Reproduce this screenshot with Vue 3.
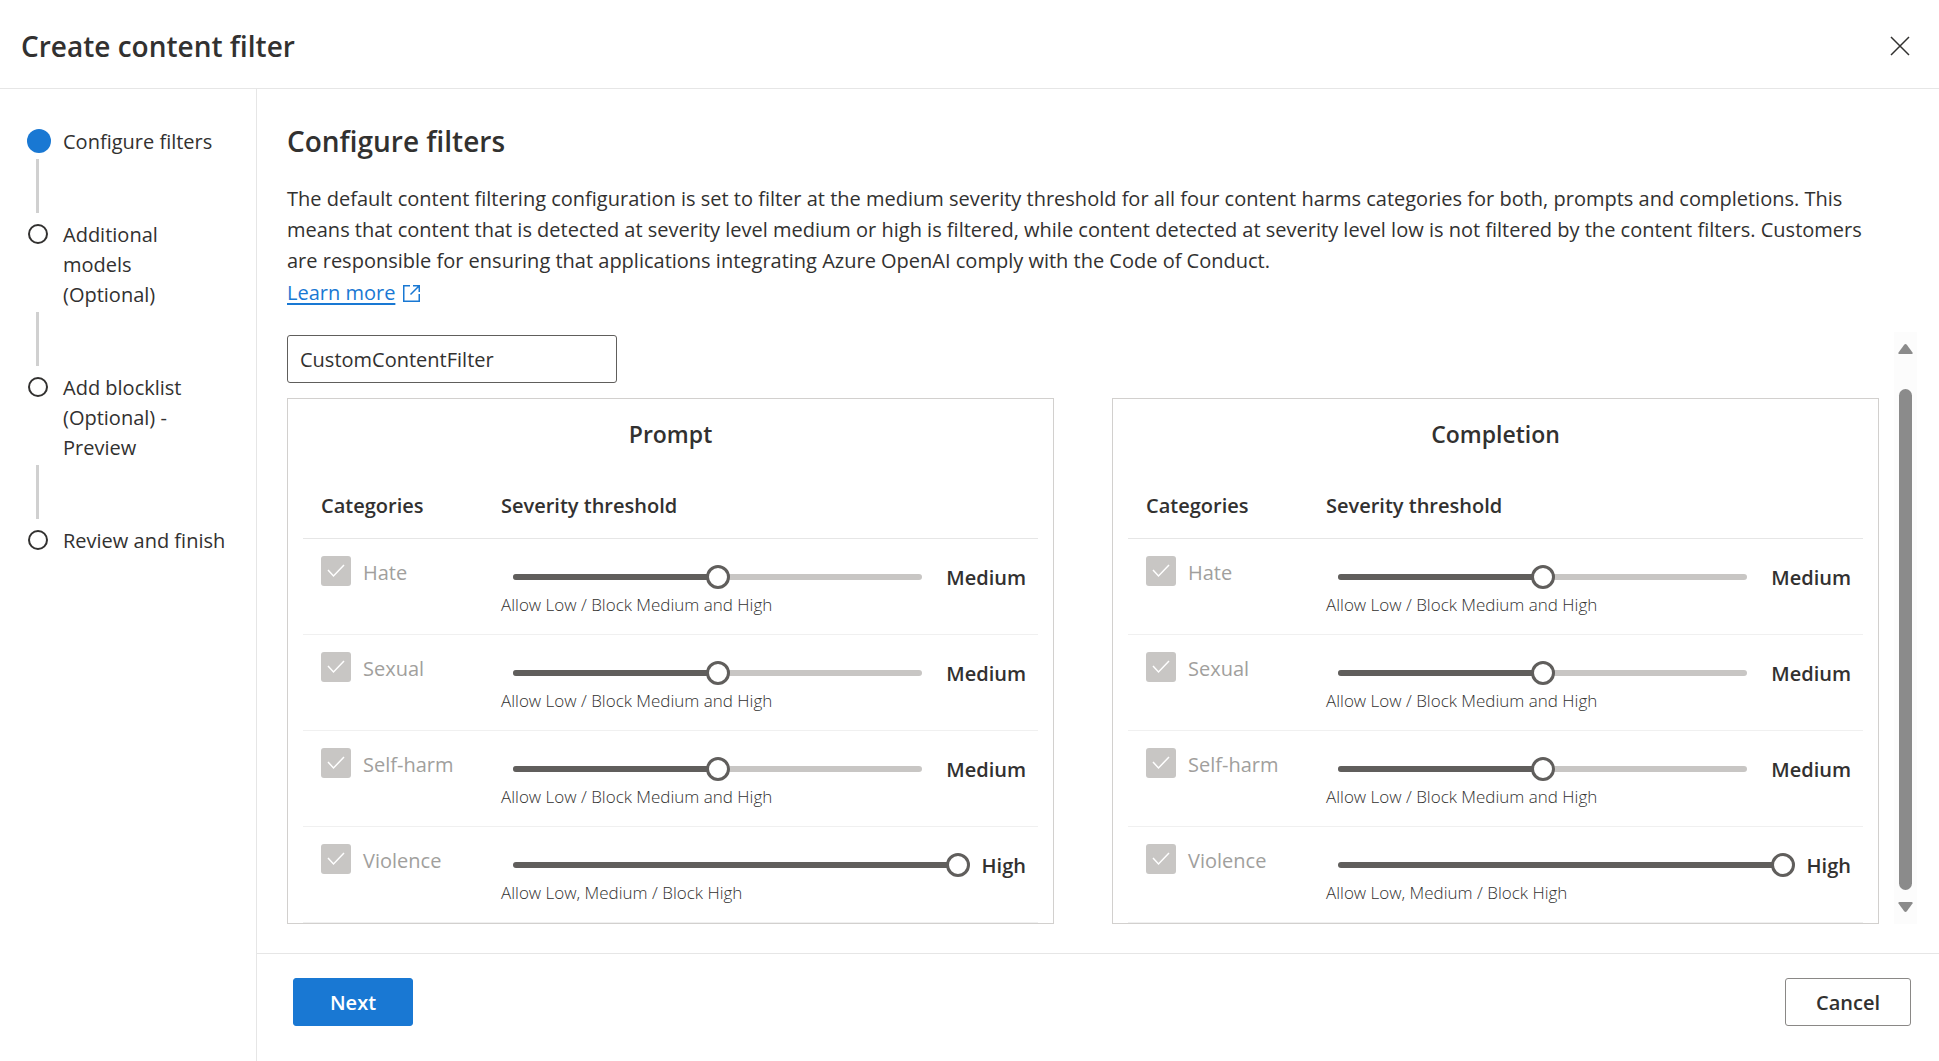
<script setup>
import { ref } from 'vue'

const steps = [
  { label: 'Configure filters', current: true },
  { label: 'Additional models (Optional)' },
  { label: 'Add blocklist (Optional) - Preview' },
  { label: 'Review and finish' },
]

const levels = ['Low', 'Medium', 'High']
const hints = [
  'Block Low, Medium and High',
  'Allow Low / Block Medium and High',
  'Allow Low, Medium / Block High',
]

const makeRows = () => [
  { name: 'Hate', level: 1 },
  { name: 'Sexual', level: 1 },
  { name: 'Self-harm', level: 1 },
  { name: 'Violence', level: 2 },
]

const filterName = ref('CustomContentFilter')
const panels = ref([
  { title: 'Prompt', rows: makeRows() },
  { title: 'Completion', rows: makeRows() },
])
</script>

<template>
  <div class="dialog">
    <header class="top">
      <h1>Create content filter</h1>
      <button class="close" type="button" aria-label="Close">
        <svg width="20" height="20" viewBox="0 0 20 20" fill="none" stroke="currentColor" stroke-width="1.5">
          <path d="M1 1 19 19M19 1 1 19" />
        </svg>
      </button>
    </header>

    <div class="body">
      <nav class="side">
        <ol>
          <li v-for="step in steps" :key="step.label" :class="{ current: step.current }">
            <span class="mark"><span class="dot"></span></span>
            <span class="label">{{ step.label }}</span>
          </li>
        </ol>
      </nav>

      <div class="content">
        <main>
          <h2>Configure filters</h2>
          <p class="intro">
            The default content filtering configuration is set to filter at the medium severity threshold for all four
            content harms categories for both, prompts and completions. This means that content that is detected at
            severity level medium or high is filtered, while content detected at severity level low is not filtered by
            the content filters. Customers are responsible for ensuring that applications integrating Azure OpenAI
            comply with the Code of Conduct.
          </p>
          <a class="more" href="#">
            <span>Learn more</span>
            <svg width="17" height="17" viewBox="0 0 17 17" fill="none" stroke="currentColor" stroke-width="1.5">
              <path d="M7 .75H.75v15.500H16.250V9M10 .75h6.250V7M16 1 7.500 9.500" />
            </svg>
          </a>

          <div class="scroller">
            <div class="pane">
              <input v-model="filterName" class="name" type="text" aria-label="Filter name" />
              <div class="cards">
                <section v-for="panel in panels" :key="panel.title" class="card">
                  <h3>{{ panel.title }}</h3>
                  <table>
                    <thead>
                      <tr>
                        <th class="category" scope="col">Categories</th>
                        <th scope="col">Severity threshold</th>
                      </tr>
                    </thead>
                    <tbody>
                      <tr v-for="row in panel.rows" :key="row.name">
                        <td class="category">
                          <label class="check">
                            <input type="checkbox" checked disabled />
                            <span>{{ row.name }}</span>
                          </label>
                        </td>
                        <td>
                          <div class="threshold">
                            <div class="slider">
                              <div class="rail">
                                <div class="fill" :style="{ width: row.level * 50 + '%' }"></div>
                              </div>
                              <input
                                v-model.number="row.level"
                                type="range"
                                min="0"
                                max="2"
                                :aria-label="panel.title + ' ' + row.name + ' severity threshold'"
                              />
                            </div>
                            <span class="value">{{ levels[row.level] }}</span>
                          </div>
                          <div class="hint">{{ hints[row.level] }}</div>
                        </td>
                      </tr>
                    </tbody>
                  </table>
                </section>
              </div>
            </div>
            <div class="scrollbar" aria-hidden="true">
              <svg width="15" height="10" viewBox="0 0 15 10">
                <path d="M6 1Q7.500-.8 9 1L14.500 8.500Q15 10 13.500 10H1.500Q0 10 .5 8.500Z" fill="currentColor" />
              </svg>
              <div class="thumb"></div>
              <svg width="15" height="10" viewBox="0 0 15 10">
                <path d="M6 9Q7.500 10.800 9 9L14.500 1.500Q15 0 13.500 0H1.500Q0 0 .5 1.500Z" fill="currentColor" />
              </svg>
            </div>
          </div>
        </main>

        <footer>
          <button class="btn primary" type="button">Next</button>
          <button class="btn" type="button">Cancel</button>
        </footer>
      </div>
    </div>
  </div>
</template>

<style>
body {
  margin: 0;
  background: #fff;
}
</style>

<style scoped>
.dialog {
  box-sizing: border-box;
  display: flex;
  flex-direction: column;
  min-height: 100vh;
  color: #323130;
  font: 20px/30px "Segoe UI", "Open Sans", "Noto Sans", sans-serif;
}

.dialog *,
.dialog *::before,
.dialog *::after {
  box-sizing: border-box;
}

h1,
h2,
h3,
p,
ol {
  margin: 0;
  padding: 0;
}

button,
input {
  font: inherit;
  color: inherit;
}

.top {
  display: flex;
  align-items: center;
  justify-content: space-between;
  padding: 26px 29px 22px 21px;
  border-bottom: 1px solid #e6e6e6;
}

h1,
h2 {
  font-size: 28px;
  line-height: 40px;
  font-weight: 600;
}

.close {
  display: flex;
  padding: 0;
  border: 0;
  background: none;
}

.body {
  display: flex;
  flex: 1;
}

.side {
  flex: none;
  width: 257px;
  padding: 38px 30px 0 27px;
  border-right: 1px solid #e6e6e6;
}

ol {
  list-style: none;
}

li {
  display: grid;
  grid-template-columns: 24px 1fr;
  column-gap: 12px;
}

.mark {
  display: flex;
  align-items: center;
  height: 28px;
  padding-left: 1px;
}

.dot {
  width: 20px;
  height: 20px;
  border: 2px solid #323130;
  border-radius: 50%;
}

.current .mark {
  padding-left: 0;
}

.current .dot {
  width: 24px;
  height: 24px;
  border: 0;
  background: #1978d3;
}

.label {
  margin-right: -20px;
  padding-right: 20px;
}

li:last-child .label {
  padding-right: 0;
}

li:not(:last-child)::after {
  content: "";
  width: 3px;
  height: 54px;
  margin: 2px 0 7px 9px;
  background: #d0d0d0;
}

.content {
  display: flex;
  flex: 1;
  flex-direction: column;
  min-width: 0;
}

main {
  flex: 1;
  padding: 32px 22px 24px 30px;
}

.intro {
  margin: 22px 38px 0 0;
  line-height: 31px;
}

.more {
  display: inline-flex;
  align-items: center;
  gap: 8px;
  line-height: 34px;
  color: #1978d3;
  text-decoration: none;
}

.more span {
  text-decoration: underline;
  text-decoration-thickness: 2px;
  text-underline-offset: 3px;
}

.scroller {
  display: flex;
  gap: 15px;
  margin-top: 22px;
}

.pane {
  flex: 1;
  min-width: 0;
  padding-top: 3px;
}

.name {
  display: block;
  width: 330px;
  height: 48px;
  padding: 0 12px;
  border: 1px solid #605e5c;
  border-radius: 3px;
  background: #fff;
}

.cards {
  display: grid;
  grid-template-columns: 1fr 1fr;
  gap: 58px;
  margin-top: 15px;
}

.card {
  min-width: 0;
  padding: 20px 15px 0;
  border: 1px solid #d2d0ce;
}

h3 {
  font-size: 23px;
  line-height: 30px;
  font-weight: 600;
  text-align: center;
}

table {
  width: 100%;
  margin-top: 24px;
  border-collapse: separate;
  border-spacing: 0;
  table-layout: fixed;
}

th,
td {
  padding: 0 12px 0 0;
  border-bottom: 1px solid #f0f0f0;
  text-align: left;
  vertical-align: top;
}

th {
  height: 66px;
  border-color: #e6e6e6;
  font-weight: 600;
  vertical-align: middle;
}

td {
  height: 96px;
}

.category {
  width: 198px;
  padding-left: 18px;
}

.check {
  display: flex;
  gap: 12px;
  margin-top: 17px;
  line-height: 34px;
  color: #a19f9d;
}

.check input {
  appearance: none;
  width: 30px;
  height: 30px;
  margin: 0;
  border-radius: 3px;
  background: #c8c6c4
    url("data:image/svg+xml,%3Csvg xmlns='http://www.w3.org/2000/svg' viewBox='0 0 30 30' fill='none' stroke='white' stroke-width='1.500'%3E%3Cpath d='M7 14l5.500 6L23 9'/%3E%3C/svg%3E");
}

.threshold {
  display: flex;
  align-items: center;
  gap: 12px;
  margin-top: 22px;
}

.slider {
  display: grid;
  flex: 1;
  align-items: center;
}

.rail,
.slider input {
  grid-area: 1 / 1;
}

.rail {
  height: 6px;
  margin: 0 12px;
  overflow: hidden;
  border-radius: 3px;
  background: #c8c6c4;
}

.fill {
  height: 100%;
  background: #605e5c;
}

.slider input {
  appearance: none;
  width: 100%;
  height: 24px;
  margin: 0;
  background: none;
}

.slider input::-webkit-slider-thumb {
  appearance: none;
  width: 24px;
  height: 24px;
  border: 3px solid #605e5c;
  border-radius: 50%;
  background: #fff;
}

.value {
  padding-top: 2px;
  font-weight: 600;
}

.hint {
  font-size: 17px;
  line-height: 24px;
  font-weight: 300;
}

.scrollbar {
  display: flex;
  flex: none;
  flex-direction: column;
  align-items: center;
  width: 23px;
  padding: 12px 0;
  background: #fcfcfc;
  color: #8b8b8b;
}

.thumb {
  flex: 1;
  width: 13px;
  margin: 35px 0 12px;
  border-radius: 7px;
  background: #8b8b8b;
}

footer {
  display: flex;
  justify-content: space-between;
  padding: 24px 28px 35px 36px;
  border-top: 1px solid #e6e6e6;
}

.btn {
  height: 48px;
  min-width: 120px;
  padding: 2px 30px 0;
  border: 1px solid #8a8886;
  border-radius: 3px;
  background: #fff;
  font-weight: 600;
}

.primary {
  border-color: #1978d3;
  background: #1978d3;
  color: #fff;
}
</style>
